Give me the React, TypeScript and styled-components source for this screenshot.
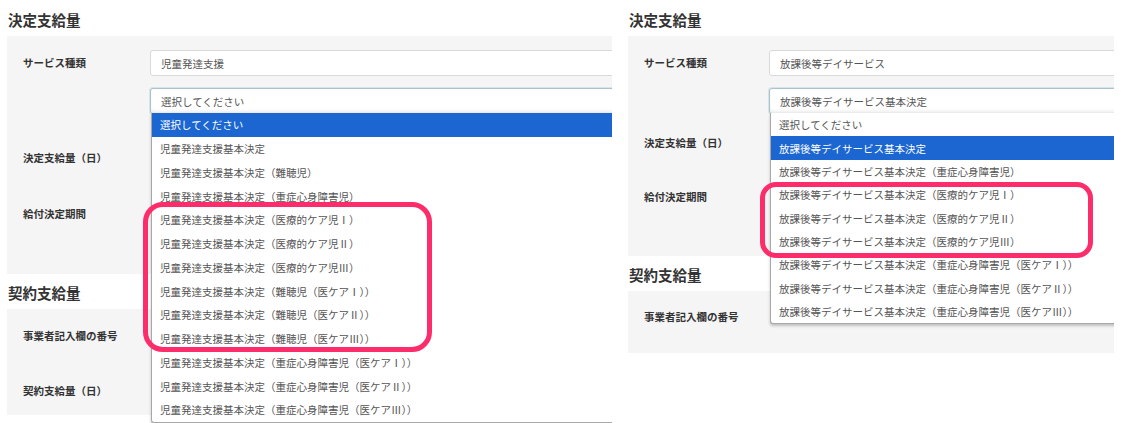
import React from 'react';
import styled, { createGlobalStyle } from 'styled-components';

const GlobalStyle = createGlobalStyle`
  body {
    margin: 0;
    background: #fff;
    font-family: "Noto Sans CJK JP", "Noto Sans", sans-serif;
  }
`;

interface RowSpec {
  label: string;
  gap: number;
  field?: 'input' | 'select';
}

interface PanelSpec {
  pt: number;
  pb: number;
  rows: RowSpec[];
}

interface ShotSpec {
  width: number;
  labelW: number;
  optionH: number;
  service: string;
  selected: string;
  options: string[];
  active: number;
  first: PanelSpec;
  second: PanelSpec;
  mark: { x: number; y: number; w: number; h: number; r: number };
}

const jidou = '児童発達支援基本決定';
const houkago = '放課後等デイサービス基本決定';

const shots: ShotSpec[] = [
  {
    width: 612,
    labelW: 127,
    optionH: 23.75,
    service: '児童発達支援',
    selected: '選択してください',
    active: 0,
    options: [
      '選択してください',
      jidou,
      `${jidou}（難聴児）`,
      `${jidou}（重症心身障害児）`,
      `${jidou}（医療的ケア児Ⅰ）`,
      `${jidou}（医療的ケア児Ⅱ）`,
      `${jidou}（医療的ケア児Ⅲ）`,
      `${jidou}（難聴児（医ケアⅠ））`,
      `${jidou}（難聴児（医ケアⅡ））`,
      `${jidou}（難聴児（医ケアⅢ））`,
      `${jidou}（重症心身障害児（医ケアⅠ））`,
      `${jidou}（重症心身障害児（医ケアⅡ））`,
      `${jidou}（重症心身障害児（医ケアⅢ））`,
    ],
    first: {
      pt: 14,
      pb: 47,
      rows: [
        { label: 'サービス種類', gap: 0, field: 'input' },
        { label: '', gap: 12, field: 'select' },
        { label: '決定支給量（日）', gap: 31 },
        { label: '給付決定期間', gap: 30 },
      ],
    },
    second: {
      pt: 14,
      pb: 11,
      rows: [
        { label: '事業者記入欄の番号', gap: 0 },
        { label: '契約支給量（日）', gap: 29 },
      ],
    },
    mark: { x: 143, y: 202, w: 289, h: 150, r: 20 },
  },
  {
    width: 493,
    labelW: 125,
    optionH: 23.35,
    service: '放課後等デイサービス',
    selected: houkago,
    active: 1,
    options: [
      '選択してください',
      houkago,
      `${houkago}（重症心身障害児）`,
      `${houkago}（医療的ケア児Ⅰ）`,
      `${houkago}（医療的ケア児Ⅱ）`,
      `${houkago}（医療的ケア児Ⅲ）`,
      `${houkago}（重症心身障害児（医ケアⅠ））`,
      `${houkago}（重症心身障害児（医ケアⅡ））`,
      `${houkago}（重症心身障害児（医ケアⅢ））`,
    ],
    first: {
      pt: 14,
      pb: 46,
      rows: [
        { label: 'サービス種類', gap: 0, field: 'input' },
        { label: '', gap: 12, field: 'select' },
        { label: '決定支給量（日）', gap: 16 },
        { label: '給付決定期間', gap: 28 },
      ],
    },
    second: {
      pt: 13,
      pb: 23,
      rows: [{ label: '事業者記入欄の番号', gap: 0 }],
    },
    mark: { x: 139, y: 182, w: 333, h: 76, r: 16 },
  },
];

function Screen({ shot }: { shot: ShotSpec }) {
  const renderRows = (panel: PanelSpec) =>
    panel.rows.map((row, i) => (
      <Row key={i} $gap={row.gap}>
        <Label $w={shot.labelW}>{row.label}</Label>
        {row.field === 'input' && <Field>{shot.service}</Field>}
        {row.field === 'select' && (
          <Field $focused>
            {shot.selected}
            <Dropdown>
              {shot.options.map((opt, j) => (
                <Option key={j} $h={shot.optionH} $active={j === shot.active}>
                  {opt}
                </Option>
              ))}
            </Dropdown>
          </Field>
        )}
      </Row>
    ));

  return (
    <ShotBox $width={shot.width}>
      <Heading>決定支給量</Heading>
      <Panel $pt={shot.first.pt} $pb={shot.first.pb}>
        {renderRows(shot.first)}
      </Panel>
      <Heading $top={8}>契約支給量</Heading>
      <Panel $pt={shot.second.pt} $pb={shot.second.pb}>
        {renderRows(shot.second)}
      </Panel>
      <Mark
        $x={shot.mark.x}
        $y={shot.mark.y}
        $w={shot.mark.w}
        $h={shot.mark.h}
        $r={shot.mark.r}
      />
    </ShotBox>
  );
}

export default function App() {
  return (
    <>
      <GlobalStyle />
      <Page>
        {shots.map((s, i) => (
          <Screen key={i} shot={s} />
        ))}
      </Page>
    </>
  );
}

// Styles
const Page = styled.div`
  display: flex;
  align-items: flex-start;
  gap: 9px;
  height: 423px;
  overflow: hidden;
`;

const ShotBox = styled.div<{ $width: number }>`
  position: relative;
  width: ${(p) => p.$width}px;
  flex-shrink: 0;
  box-sizing: border-box;
  padding: 9px 0 0 7px;
  overflow-x: clip;
  overflow-y: visible;
`;

const Heading = styled.h2<{ $top?: number }>`
  margin: ${(p) => p.$top ?? 0}px 0 5px 1px;
  font-size: 14.5px;
  line-height: 22px;
  font-weight: 700;
  color: #333;
`;

const Panel = styled.div<{ $pt: number; $pb: number }>`
  display: flex;
  flex-direction: column;
  background: #f5f5f5;
  padding: ${(p) => p.$pt}px 0 ${(p) => p.$pb}px 16px;
`;

const Row = styled.div<{ $gap: number }>`
  display: flex;
  align-items: center;
  height: 26px;
  margin-top: ${(p) => p.$gap}px;
`;

const Label = styled.div<{ $w: number }>`
  width: ${(p) => p.$w}px;
  flex-shrink: 0;
  font-size: 10.5px;
  font-weight: 700;
  color: #333;
  margin-top: -2px;
`;

const Field = styled.div<{ $focused?: boolean }>`
  position: relative;
  display: flex;
  align-items: center;
  flex-shrink: 0;
  width: 700px;
  height: 26px;
  box-sizing: border-box;
  padding: 0 10px;
  background: #fff;
  border: 1px solid ${(p) => (p.$focused ? '#a9c3cc' : '#d9d9d9')};
  border-radius: 3px;
  font-size: 10.5px;
  color: #555;
  box-shadow: ${(p) =>
    p.$focused
      ? '0 0 0 1px rgba(190, 212, 220, 0.5), inset 0 -3px 4px -2px rgba(0, 0, 0, 0.12)'
      : 'none'};
`;

const Dropdown = styled.div`
  position: absolute;
  top: 100%;
  left: 0;
  z-index: 5;
  width: 700px;
  background: #fff;
  border-left: 1px solid #a8a8a8;
  border-bottom: 1px solid #a8a8a8;
  border-bottom-left-radius: 3px;
  box-shadow: 0 2px 3px rgba(0, 0, 0, 0.22);
`;

const Option = styled.div<{ $active?: boolean; $h: number }>`
  display: flex;
  align-items: center;
  height: ${(p) => p.$h}px;
  padding-left: 8px;
  font-size: 10.5px;
  white-space: nowrap;
  color: ${(p) => (p.$active ? '#fff' : '#555')};
  background: ${(p) => (p.$active ? '#1b66d1' : 'transparent')};
`;

const Mark = styled.div<{ $x: number; $y: number; $w: number; $h: number; $r: number }>`
  position: absolute;
  z-index: 10;
  left: ${(p) => p.$x}px;
  top: ${(p) => p.$y}px;
  width: ${(p) => p.$w}px;
  height: ${(p) => p.$h}px;
  box-sizing: border-box;
  border: 5px solid #fd2d6c;
  border-radius: ${(p) => p.$r}px;
  pointer-events: none;
`;
